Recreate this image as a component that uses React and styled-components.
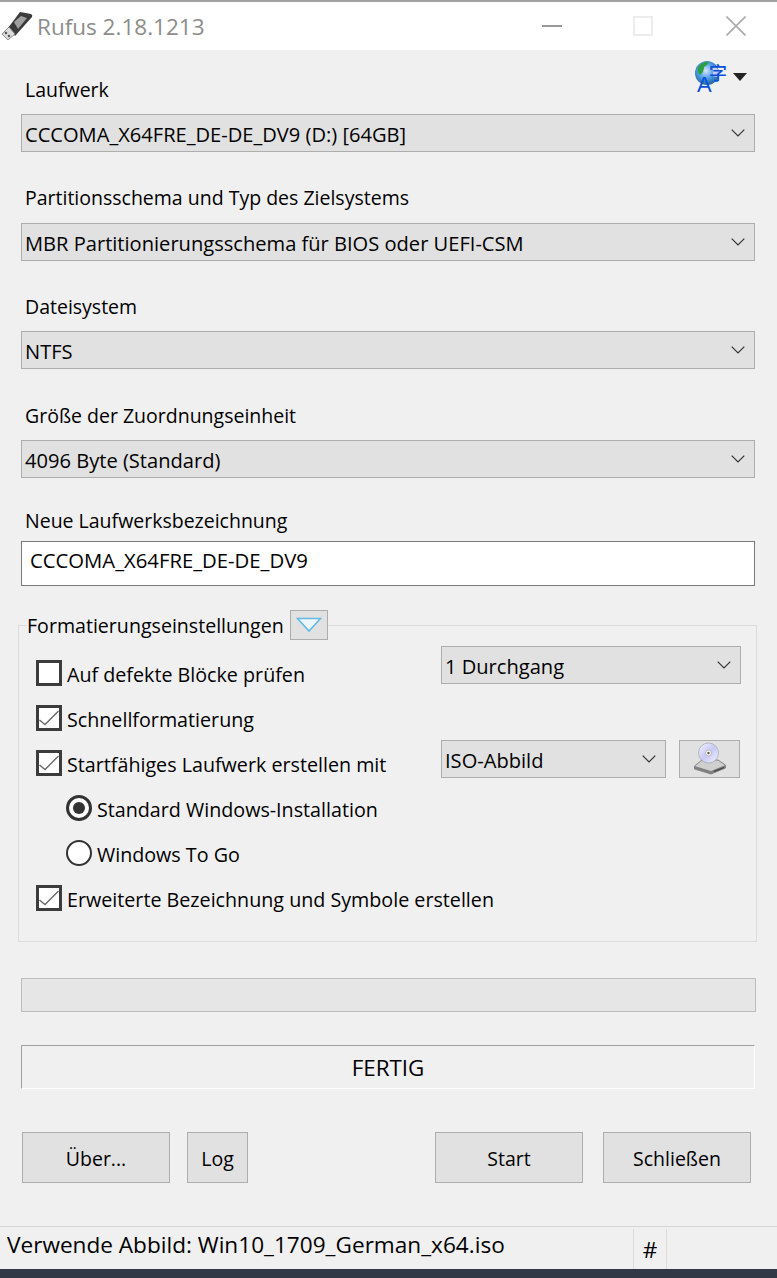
import styled, { createGlobalStyle } from 'styled-components'

const GlobalStyle = createGlobalStyle`
    html, body {
        margin: 0;
        padding: 0;
        background-color: #f0f0f0;
    }
    * {
        box-sizing: border-box;
    }
`;

const Window = styled.div`
    display: flex;
    flex-direction: column;
    width: 777px;
    height: 1278px;
    overflow: hidden;
    background-color: #f0f0f0;
    color: #000;
    font-family: 'Open Sans', 'Liberation Sans', sans-serif;
    font-size: 19.5px;
`;
const TitleBar = styled.div`
    display: flex;
    align-items: center;
    height: 50px;
    flex-shrink: 0;
    background-color: #fff;
    border-top: 2px solid #a3a3a3;
    padding-left: 1px;
`;
const AppName = styled.div`
    flex: 1;
    margin-left: 4px;
    font-size: 22.5px;
    color: #8c8c8c;
`;
const WindowControls = styled.div`
    display: flex;
    align-items: center;
    margin-right: 31px;
    gap: 71px;
`;
const MaximizeIcon = styled.svg`
    margin-right: 2px;
`;
const Main = styled.div`
    display: flex;
    flex-direction: column;
    padding: 10px 22px 0 21px;
`;
const Field = styled.div`
    display: flex;
    flex-direction: column;
    margin-top: ${props => props.$top || 0}px;
`;
const FieldHead = styled.div`
    display: flex;
    justify-content: space-between;
    align-items: flex-start;
    height: 44px;
    margin-bottom: 10px;
`;
const Label = styled.div`
    height: 28px;
    line-height: 27px;
    margin-left: 4px;
    margin-bottom: ${props => props.$gap ?? 10}px;
`;
const HeadLabel = styled(Label)`
    margin-top: 16px;
    margin-bottom: 0;
`;
const LangButton = styled.div`
    display: flex;
    align-items: flex-start;
    gap: 4px;
    margin-right: 8px;
`;
const LangArrow = styled.svg`
    margin-top: 13px;
`;
const Select = styled.div`
    display: flex;
    align-items: center;
    justify-content: space-between;
    width: ${props => props.$width || '100%'};
    height: 38px;
    padding: 0 9px 0 3px;
    background-color: #e1e1e1;
    border: 1px solid #adadad;
    font-size: 20.1px;
    white-space: nowrap;
`;
const SelectText = styled.span`
    padding-top: 3px;
`;
const TextInput = styled.input`
    width: 100%;
    height: 45px;
    padding: 0 8px 7px;
    background-color: #fff;
    border: 1px solid #7a7a7a;
    border-radius: 0;
    outline: none;
    font: inherit;
    font-size: 20.3px;
    color: #000;
`;
const Group = styled.fieldset`
    margin: 24px -2px 0 -3px;
    padding: 0;
    min-width: 0;
    border: 1px solid #dcdcdc;
`;
const Legend = styled.legend`
    display: flex;
    align-items: center;
    height: 30px;
    padding: 0;
    margin-left: 8px;
    font-size: 19.6px;
`;
const LegendButton = styled.div`
    display: flex;
    align-items: center;
    justify-content: center;
    width: 38px;
    height: 30px;
    margin-left: 6px;
    background-color: #e1e1e1;
    border: 1px solid #adadad;
`;
const GroupBody = styled.div`
    display: flex;
    flex-direction: column;
    padding: 11px 15px 20px 17px;
    font-size: 19.7px;
`;
const GroupTop = styled.div`
    display: flex;
`;
const Options = styled.div`
    display: flex;
    flex-direction: column;
    width: 405px;
`;
const OptionRow = styled.div`
    display: flex;
    align-items: center;
    height: 45px;
    gap: 5px;
    padding-top: 2px;
    padding-left: ${props => props.$indent || 0}px;
    white-space: nowrap;
`;
const CheckBox = styled.div`
    display: flex;
    align-items: center;
    justify-content: center;
    width: 26px;
    height: 26px;
    margin-top: -4px;
    background-color: #fff;
    border: 3px solid #3c3c3c;
`;
const Radio = styled.div`
    display: flex;
    align-items: center;
    justify-content: center;
    width: 26px;
    height: 26px;
    margin-top: -4px;
    border-radius: 50%;
    background-color: #fff;
    border: ${props => (props.$on ? 3 : 2)}px solid #333;

    &::after {
        content: '';
        display: ${props => (props.$on ? 'block' : 'none')};
        width: 12px;
        height: 12px;
        border-radius: 50%;
        background-color: #333;
    }
`;
const SideControls = styled.div`
    display: flex;
    flex-direction: column;
    gap: 56px;
    width: 300px;
    margin-top: -5px;
`;
const SideRow = styled.div`
    display: flex;
    gap: 13px;
`;
const IconButton = styled.div`
    display: flex;
    align-items: center;
    justify-content: center;
    width: 61px;
    height: 38px;
    background-color: #e1e1e1;
    border: 1px solid #adadad;
`;
const Progress = styled.div`
    height: 34px;
    margin: 36px -1px 0 0;
    background-color: #e6e6e6;
    border: 1px solid #bcbcbc;
`;
const Status = styled.div`
    display: flex;
    align-items: center;
    justify-content: center;
    height: 44px;
    margin-top: 33px;
    background-color: #f0f0f0;
    border-style: solid;
    border-width: 1px;
    border-color: #a0a0a0 #fff #fff #a0a0a0;
    font-size: 22.4px;
`;
const ButtonBar = styled.div`
    display: flex;
    justify-content: space-between;
    margin: 43px 4px 0 1px;
`;
const ButtonGroup = styled.div`
    display: flex;
    gap: ${props => props.$gap}px;
`;
const Button = styled.div`
    display: flex;
    align-items: center;
    justify-content: center;
    width: ${props => props.$width || 148}px;
    height: 51px;
    padding-top: 2px;
    background-color: #e1e1e1;
    border: 1px solid #adadad;
`;
const StatusBar = styled.div`
    display: flex;
    margin-top: auto;
    height: 43px;
    padding-top: 2px;
    border-top: 1px solid #d5d5d5;
    font-size: 22.6px;
`;
const StatusCell = styled.div`
    display: flex;
    align-items: center;
    width: ${props => props.$width};
    justify-content: ${props => (props.$center ? 'center' : 'flex-start')};
    padding-left: ${props => (props.$center ? 0 : 7)}px;
    padding-bottom: ${props => (props.$center ? 0 : 10)}px;
    border-right: 1px solid #dcdcdc;
    white-space: nowrap;
`;
const BottomEdge = styled.div`
    height: 9px;
    flex-shrink: 0;
    background-color: #333846;
`;

const Chevron = () => (
  <svg width="14" height="8" viewBox="0 0 14 8" fill="none">
    <path d="M0.7 0.7 L7 7 L13.3 0.7" stroke="#333" strokeWidth="1.2" />
  </svg>
);

const Check = () => (
  <svg width="20" height="20" viewBox="0 0 20 20" fill="none">
    <path d="M0.5 12 L6 16.5 L19.5 3" stroke="#666" strokeWidth="1.3" />
  </svg>
);

const UsbIcon = () => (
  <svg width="32" height="32" viewBox="0 0 32 32">
    <path d="M19 2 L30 4 Q32 5 31 7 L14 26 L7 18 Z" fill="#3b3b3b" />
    <path d="M13 12 L20 6 L26 8 L17 19 Z" fill="#a0a0a0" />
    <path d="M1 24 L8 17 L14 24 L7 30 Z" fill="#dcdcdc" stroke="#777" strokeWidth="0.8" />
    <rect x="4" y="22" width="2" height="2" fill="#444" transform="rotate(-45 5 23)" />
    <rect x="7" y="25" width="2" height="2" fill="#444" transform="rotate(-45 8 26)" />
  </svg>
);

const GlobeIcon = () => (
  <svg width="34" height="38" viewBox="0 0 34 38">
    <defs>
      <radialGradient id="globe" cx="0.45" cy="0.4" r="0.65">
        <stop offset="0" stopColor="#d8e6ff" />
        <stop offset="0.5" stopColor="#4f9fe8" />
        <stop offset="1" stopColor="#1d5a8c" />
      </radialGradient>
    </defs>
    <circle cx="12" cy="13" r="12" fill="url(#globe)" />
    <path d="M3 7 Q8 1 14 2 Q12 6 9 7 Q9 12 5 15 Q2 12 3 7 Z" fill="#2f9e3f" />
    <path d="M18 6 Q26 8 25 18 L18 16 Z" fill="#e6dcff" opacity="0.8" />
    <text x="14" y="20" fontSize="18" fontWeight="500" fill="#0b50dc" fontFamily="'Noto Sans CJK SC', sans-serif">字</text>
    <text x="2" y="32" fontSize="22" fill="#0b50dc" fontFamily="'Liberation Sans', sans-serif">A</text>
  </svg>
);

const DiscDriveIcon = () => (
  <svg width="34" height="34" viewBox="0 0 34 34">
    <defs>
      <linearGradient id="disc" x1="0" y1="0" x2="1" y2="1">
        <stop offset="0" stopColor="#f6f6ff" />
        <stop offset="0.5" stopColor="#c8c8f5" />
        <stop offset="1" stopColor="#f2f4ff" />
      </linearGradient>
    </defs>
    <path d="M1.5 24 L9 18 L25 18 L32.5 23 L32.5 26 L18 32 L1.5 27 Z" fill="#cfcfcf" stroke="#707070" strokeWidth="0.8" />
    <path d="M1.5 24 L18 29 L32.5 23 L32.5 26 L18 32 L1.5 27 Z" fill="#808080" />
    <path d="M21 29.5 L31 25.5" stroke="#3f3f3f" strokeWidth="1.2" />
    <circle cx="15.5" cy="11" r="10" fill="url(#disc)" stroke="#a5a5b0" strokeWidth="0.7" />
    <circle cx="15.5" cy="11" r="3" fill="#fff" stroke="#a0a0a0" strokeWidth="0.7" />
    <circle cx="15.5" cy="11" r="1.2" fill="#555" />
  </svg>
);

const App = () => {
  return (
    <Window>
      <GlobalStyle />
      <TitleBar>
        <UsbIcon />
        <AppName>Rufus 2.18.1213</AppName>
        <WindowControls>
          <svg width="20" height="20" viewBox="0 0 20 20">
            <path d="M0 10 H20" stroke="#999" strokeWidth="2" />
          </svg>
          <MaximizeIcon width="20" height="20" viewBox="0 0 20 20" fill="none">
            <rect x="1" y="1" width="18" height="18" stroke="#ececec" strokeWidth="2" />
          </MaximizeIcon>
          <svg width="20" height="20" viewBox="0 0 20 20" fill="none">
            <path d="M0.5 0.5 L19.5 19.5 M19.5 0.5 L0.5 19.5" stroke="#aaa" strokeWidth="1.6" />
          </svg>
        </WindowControls>
      </TitleBar>
      <Main>
        <Field>
          <FieldHead>
            <HeadLabel>Laufwerk</HeadLabel>
            <LangButton>
              <GlobeIcon />
              <LangArrow width="14" height="8" viewBox="0 0 14 8">
                <path d="M0 0 H14 L7 8 Z" fill="#222" />
              </LangArrow>
            </LangButton>
          </FieldHead>
          <Select><SelectText>CCCOMA_X64FRE_DE-DE_DV9 (D:) [64GB]</SelectText><Chevron /></Select>
        </Field>
        <Field $top={32}>
          <Label $gap={11}>Partitionsschema und Typ des Zielsystems</Label>
          <Select><SelectText>MBR Partitionierungsschema für BIOS oder UEFI-CSM</SelectText><Chevron /></Select>
        </Field>
        <Field $top={32}>
          <Label>Dateisystem</Label>
          <Select><SelectText>NTFS</SelectText><Chevron /></Select>
        </Field>
        <Field $top={33}>
          <Label>Größe der Zuordnungseinheit</Label>
          <Select><SelectText>4096 Byte (Standard)</SelectText><Chevron /></Select>
        </Field>
        <Field $top={29}>
          <Label $gap={6}>Neue Laufwerksbezeichnung</Label>
          <TextInput defaultValue="CCCOMA_X64FRE_DE-DE_DV9" />
        </Field>
        <Group>
          <Legend>
            Formatierungseinstellungen
            <LegendButton>
              <svg width="26" height="16" viewBox="0 0 26 16" fill="none">
                <path d="M1.5 1.5 H24.5 L13 14 Z" stroke="#62bbe8" strokeWidth="1.6" fill="#eef6fb" />
              </svg>
            </LegendButton>
          </Legend>
          <GroupBody>
            <GroupTop>
              <Options>
                <OptionRow><CheckBox />Auf defekte Blöcke prüfen</OptionRow>
                <OptionRow><CheckBox><Check /></CheckBox>Schnellformatierung</OptionRow>
                <OptionRow><CheckBox><Check /></CheckBox>Startfähiges Laufwerk erstellen mit</OptionRow>
                <OptionRow $indent={30}><Radio $on />Standard Windows-Installation</OptionRow>
                <OptionRow $indent={30}><Radio />Windows To Go</OptionRow>
              </Options>
              <SideControls>
                <Select><SelectText>1 Durchgang</SelectText><Chevron /></Select>
                <SideRow>
                  <Select $width="225px"><SelectText>ISO-Abbild</SelectText><Chevron /></Select>
                  <IconButton><DiscDriveIcon /></IconButton>
                </SideRow>
              </SideControls>
            </GroupTop>
            <OptionRow><CheckBox><Check /></CheckBox>Erweiterte Bezeichnung und Symbole erstellen</OptionRow>
          </GroupBody>
        </Group>
        <Progress />
        <Status>FERTIG</Status>
        <ButtonBar>
          <ButtonGroup $gap={17}>
            <Button>Über...</Button>
            <Button $width={61}>Log</Button>
          </ButtonGroup>
          <ButtonGroup $gap={20}>
            <Button>Start</Button>
            <Button>Schließen</Button>
          </ButtonGroup>
        </ButtonBar>
      </Main>
      <StatusBar>
        <StatusCell $width="634px">Verwende Abbild: Win10_1709_German_x64.iso</StatusCell>
        <StatusCell $width="33px" $center>#</StatusCell>
      </StatusBar>
      <BottomEdge />
    </Window>
  )
}

export default App
